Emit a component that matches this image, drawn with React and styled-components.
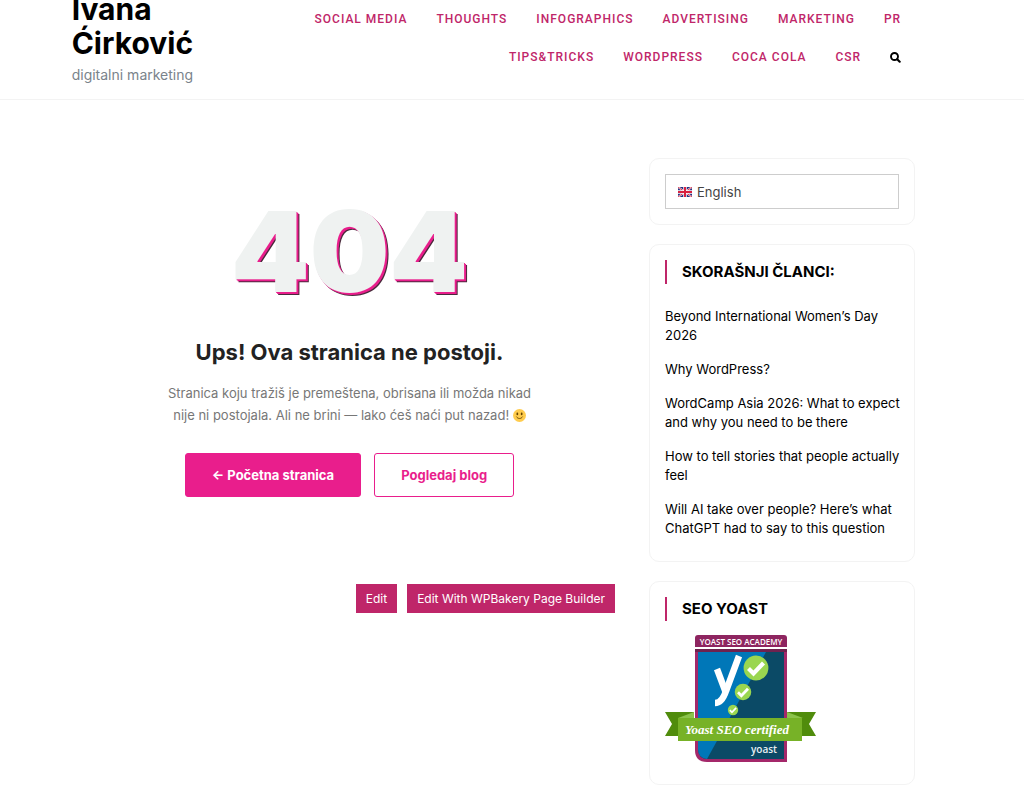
import React, { useState } from 'react';
import styled, { createGlobalStyle } from 'styled-components';

const GlobalStyle = createGlobalStyle`
	* {
		box-sizing: border-box;
	}

	body {
		margin: 0;
		background: #fff;
		color: #000;
		font-family: Inter, 'Open Sans', 'Liberation Sans', sans-serif;
		font-size: 13px;
	}

	a {
		color: inherit;
		text-decoration: none;
	}
`;

const Page = styled.div`
	overflow: hidden;
`;

const Header = styled.header`
	display: flex;
	justify-content: space-between;
	margin-top: -8px;
	padding: 0 12% 12px 7%;
	border-bottom: 1px solid #f3f3f3;
`;

const Brand = styled.div`
	flex: 0 0 140px;
`;

const SiteTitle = styled.p`
	margin: 0;
	font-size: 30px;
	font-weight: 700;
	line-height: 34px;
`;

const Tagline = styled.p`
	margin: 3px 0 0;
	color: #7a838b;
	font-size: 14px;
	line-height: 24px;
	white-space: nowrap;
`;

const Nav = styled.nav`
	flex: 0 1 620px;
	display: flex;
	flex-wrap: wrap;
	justify-content: flex-end;
	align-content: flex-start;
	column-gap: 29px;
	padding-top: 8px;
`;

const NavLink = styled.a`
	color: #bf2669;
	font-family: Roboto, 'Liberation Sans', sans-serif;
	font-size: 12px;
	font-weight: 500;
	letter-spacing: 1px;
	line-height: 38px;
	text-transform: uppercase;
`;

const SearchButton = styled.button`
	display: flex;
	align-items: center;
	padding: 0;
	border: none;
	background: none;
	color: #000;
`;

const Layout = styled.div`
	display: flex;
	gap: 34px;
	padding: 58px 109px 0 84px;
`;

const Main = styled.main`
	flex: 1;
	min-width: 0;
`;

const NotFound = styled.section`
	display: flex;
	flex-direction: column;
	align-items: center;
	padding-top: 36px;
	text-align: center;
`;

const Code = styled.div`
	color: #eff2f1;
	font-size: 112px;
	font-weight: 900;
	line-height: 115px;
	text-shadow: 1px 1px #e91e8c, 2px 2px #e91e8c, 3px 3px #4a2a3c;
`;

const Title = styled.h1`
	margin: 27px 0 0;
	color: #222;
	font-size: 22px;
	font-weight: 700;
	line-height: 32px;
`;

const Message = styled.p`
	max-width: 380px;
	margin: 14px 0 0;
	color: #777;
	line-height: 22px;

	svg {
		vertical-align: -2px;
	}
`;

const Actions = styled.div`
	display: flex;
	gap: 13px;
	margin-top: 27px;
`;

const ActionLink = styled.a`
	padding: 0 26px;
	border: 1px solid #e91e8c;
	border-radius: 3px;
	background: ${(props) => (props.$outline ? '#fff' : '#e91e8c')};
	color: ${(props) => (props.$outline ? '#e91e8c' : '#fff')};
	font-weight: 700;
	line-height: 42px;
`;

const EditBar = styled.div`
	display: flex;
	justify-content: flex-end;
	gap: 10px;
	margin-top: 87px;
`;

const EditLink = styled.a`
	padding: 0 10px;
	background: #bf2669;
	color: #fff;
	font-size: 12px;
	line-height: 29px;
`;

const Aside = styled.aside`
	flex: 0 0 266px;
	display: flex;
	flex-direction: column;
	gap: 19px;
`;

const Card = styled.section`
	padding: 15px;
	border: 1px solid #f3f3f3;
	border-radius: 10px;
`;

const CardTitle = styled.h2`
	margin: 0;
	padding-left: 15px;
	border-left: 2px solid #bf2669;
	font-size: 15px;
	font-weight: 700;
	line-height: 24px;
`;

const Language = styled.label`
	display: flex;
	align-items: center;
	gap: 5px;
	height: 35px;
	padding: 0 12px;
	border: 1px solid #cdcdcd;
`;

const LanguageSelect = styled.select`
	flex: 1;
	padding: 0;
	border: none;
	outline: none;
	appearance: none;
	background: none;
	color: #444;
	font: inherit;
`;

const PostList = styled.ul`
	margin: 16px -12px 0 0;
	padding: 0;
	list-style: none;
`;

const Post = styled.li`
	padding: 7px 0 8px;
	line-height: 19px;
`;

const Badge = styled.svg`
	display: block;
	margin: 13px 0 7px;
`;

const menu = [
	'Social Media',
	'Thoughts',
	'Infographics',
	'Advertising',
	'Marketing',
	'PR',
	'Tips&Tricks',
	'WordPress',
	'Coca Cola',
	'CSR',
];

const posts = [
	'Beyond International Women’s Day 2026',
	'Why WordPress?',
	'WordCamp Asia 2026: What to expect and why you need to be there',
	'How to tell stories that people actually feel',
	'Will AI take over people? Here’s what ChatGPT had to say to this question',
];

const SearchIcon = () => (
	<svg width="11" height="11" viewBox="0 0 11 11" fill="none" stroke="currentColor" aria-hidden="true">
		<circle cx="4.5" cy="4.5" r="3.5" strokeWidth="1.9" />
		<path d="M7.2 7.2l2.5 2.5" strokeWidth="2.1" strokeLinecap="round" />
	</svg>
);

const Flag = () => (
	<svg width="14" height="10" viewBox="0 0 14 10" aria-hidden="true">
		<rect width="14" height="10" rx="1" fill="#25307f" />
		<path d="M0 0l14 10M14 0L0 10" stroke="#fff" strokeWidth="1.8" />
		<path d="M0 0l14 10M14 0L0 10" stroke="#d8203f" strokeWidth="0.9" />
		<path d="M7 0v10M0 5h14" stroke="#fff" strokeWidth="3.4" />
		<path d="M7 0v10M0 5h14" stroke="#d8203f" strokeWidth="2" />
	</svg>
);

const Smile = () => (
	<svg width="13" height="13" viewBox="0 0 36 36" role="img" aria-label="smile">
		<circle cx="18" cy="18" r="18" fill="#ffcc4d" />
		<ellipse cx="12" cy="13.5" rx="2.5" ry="3.5" fill="#664500" />
		<ellipse cx="24" cy="13.5" rx="2.5" ry="3.5" fill="#664500" />
		<path d="M10 22c3 6 13 6 16 0" fill="none" stroke="#664500" strokeWidth="2.5" strokeLinecap="round" />
	</svg>
);

const Check = ({ x, y, r }) => (
	<g transform={`translate(${x} ${y}) scale(${r / 12})`}>
		<circle r="12.4" fill="#9ad650" />
		<path d="M-7.5 0.5l5 5L7.5-5" fill="none" stroke="#fff" strokeWidth="4.2" />
	</g>
);

const YoastBadge = () => (
	<Badge width="151" height="128" viewBox="0 0 151 128" role="img" aria-label="Yoast SEO certified">
		<path d="M30 13V4q0-3 3-3h86q3 0 3 3v9z" fill="#8e2560" />
		<path d="M30 15h92v113H42q-12 0-12-12z" fill="#a4286a" />
		<path d="M30 15h92v3H30z" fill="#6f224f" />
		<path d="M33 18h86v107H43q-10 0-10-10z" fill="#0b4a66" />
		<path d="M33 18h68L42 125q-9-1-9-10z" fill="#0077b8" />
		<path d="M52 35l9 24" fill="none" stroke="#fff" strokeWidth="6.5" />
		<path d="M74 22L61 57q-4 12-11 12" fill="none" stroke="#fff" strokeWidth="6.5" />
		<Check x={91} y={34} r={12} />
		<Check x={78} y={58} r={8} />
		<Check x={68} y={76} r={5} />
		<path d="M0 78h29v24H0l7-12zM151 78h-29v24h29l-7-12z" fill="#508c0c" />
		<path d="M13 84l16-6v6zM138 84l-16-6v6z" fill="#8bc34a" />
		<path d="M13 84h124v23H13z" fill="#77b227" />
		<text x="76" y="11" textAnchor="middle" fill="#fff" fontFamily="Open Sans, sans-serif" fontSize="8" fontWeight="600">
			YOAST SEO ACADEMY
		</text>
		<text
			x="72"
			y="100"
			textAnchor="middle"
			fill="#fff"
			fontFamily="Liberation Serif, serif"
			fontSize="13"
			fontStyle="italic"
			fontWeight="700"
		>
			Yoast SEO certified
		</text>
		<text x="99" y="119" textAnchor="middle" fill="#e8eff2" fontFamily="Open Sans, sans-serif" fontSize="10" fontWeight="600">
			yoast
		</text>
	</Badge>
);

const App = () => {
	const [language, setLanguage] = useState('en');

	return (
		<Page>
			<GlobalStyle />
			<Header>
				<Brand>
					<SiteTitle>
						<a href="#home">Ivana Ćirković</a>
					</SiteTitle>
					<Tagline>digitalni marketing</Tagline>
				</Brand>
				<Nav>
					{menu.map((item) => (
						<NavLink key={item} href="#menu">{item}</NavLink>
					))}
					<SearchButton type="button" aria-label="Search">
						<SearchIcon />
					</SearchButton>
				</Nav>
			</Header>
			<Layout>
				<Main>
					<NotFound>
						<Code>404</Code>
						<Title>Ups! Ova stranica ne postoji.</Title>
						<Message>
							Stranica koju tražiš je premeštena, obrisana ili možda nikad nije ni postojala. Ali ne brini — lako ćeš naći put nazad! <Smile />
						</Message>
						<Actions>
							<ActionLink href="#home">← Početna stranica</ActionLink>
							<ActionLink href="#blog" $outline>Pogledaj blog</ActionLink>
						</Actions>
					</NotFound>
					<EditBar>
						<EditLink href="#edit">Edit</EditLink>
						<EditLink href="#builder">Edit With WPBakery Page Builder</EditLink>
					</EditBar>
				</Main>
				<Aside>
					<Card>
						<Language>
							<Flag />
							<LanguageSelect
								aria-label="Language"
								value={language}
								onChange={(e) => setLanguage(e.target.value)}
							>
								<option value="en">English</option>
							</LanguageSelect>
						</Language>
					</Card>
					<Card>
						<CardTitle>SKORAŠNJI ČLANCI:</CardTitle>
						<PostList>
							{posts.map((post) => (
								<Post key={post}>
									<a href="#post">{post}</a>
								</Post>
							))}
						</PostList>
					</Card>
					<Card>
						<CardTitle>SEO YOAST</CardTitle>
						<YoastBadge />
					</Card>
				</Aside>
			</Layout>
		</Page>
	);
};

export default App;
